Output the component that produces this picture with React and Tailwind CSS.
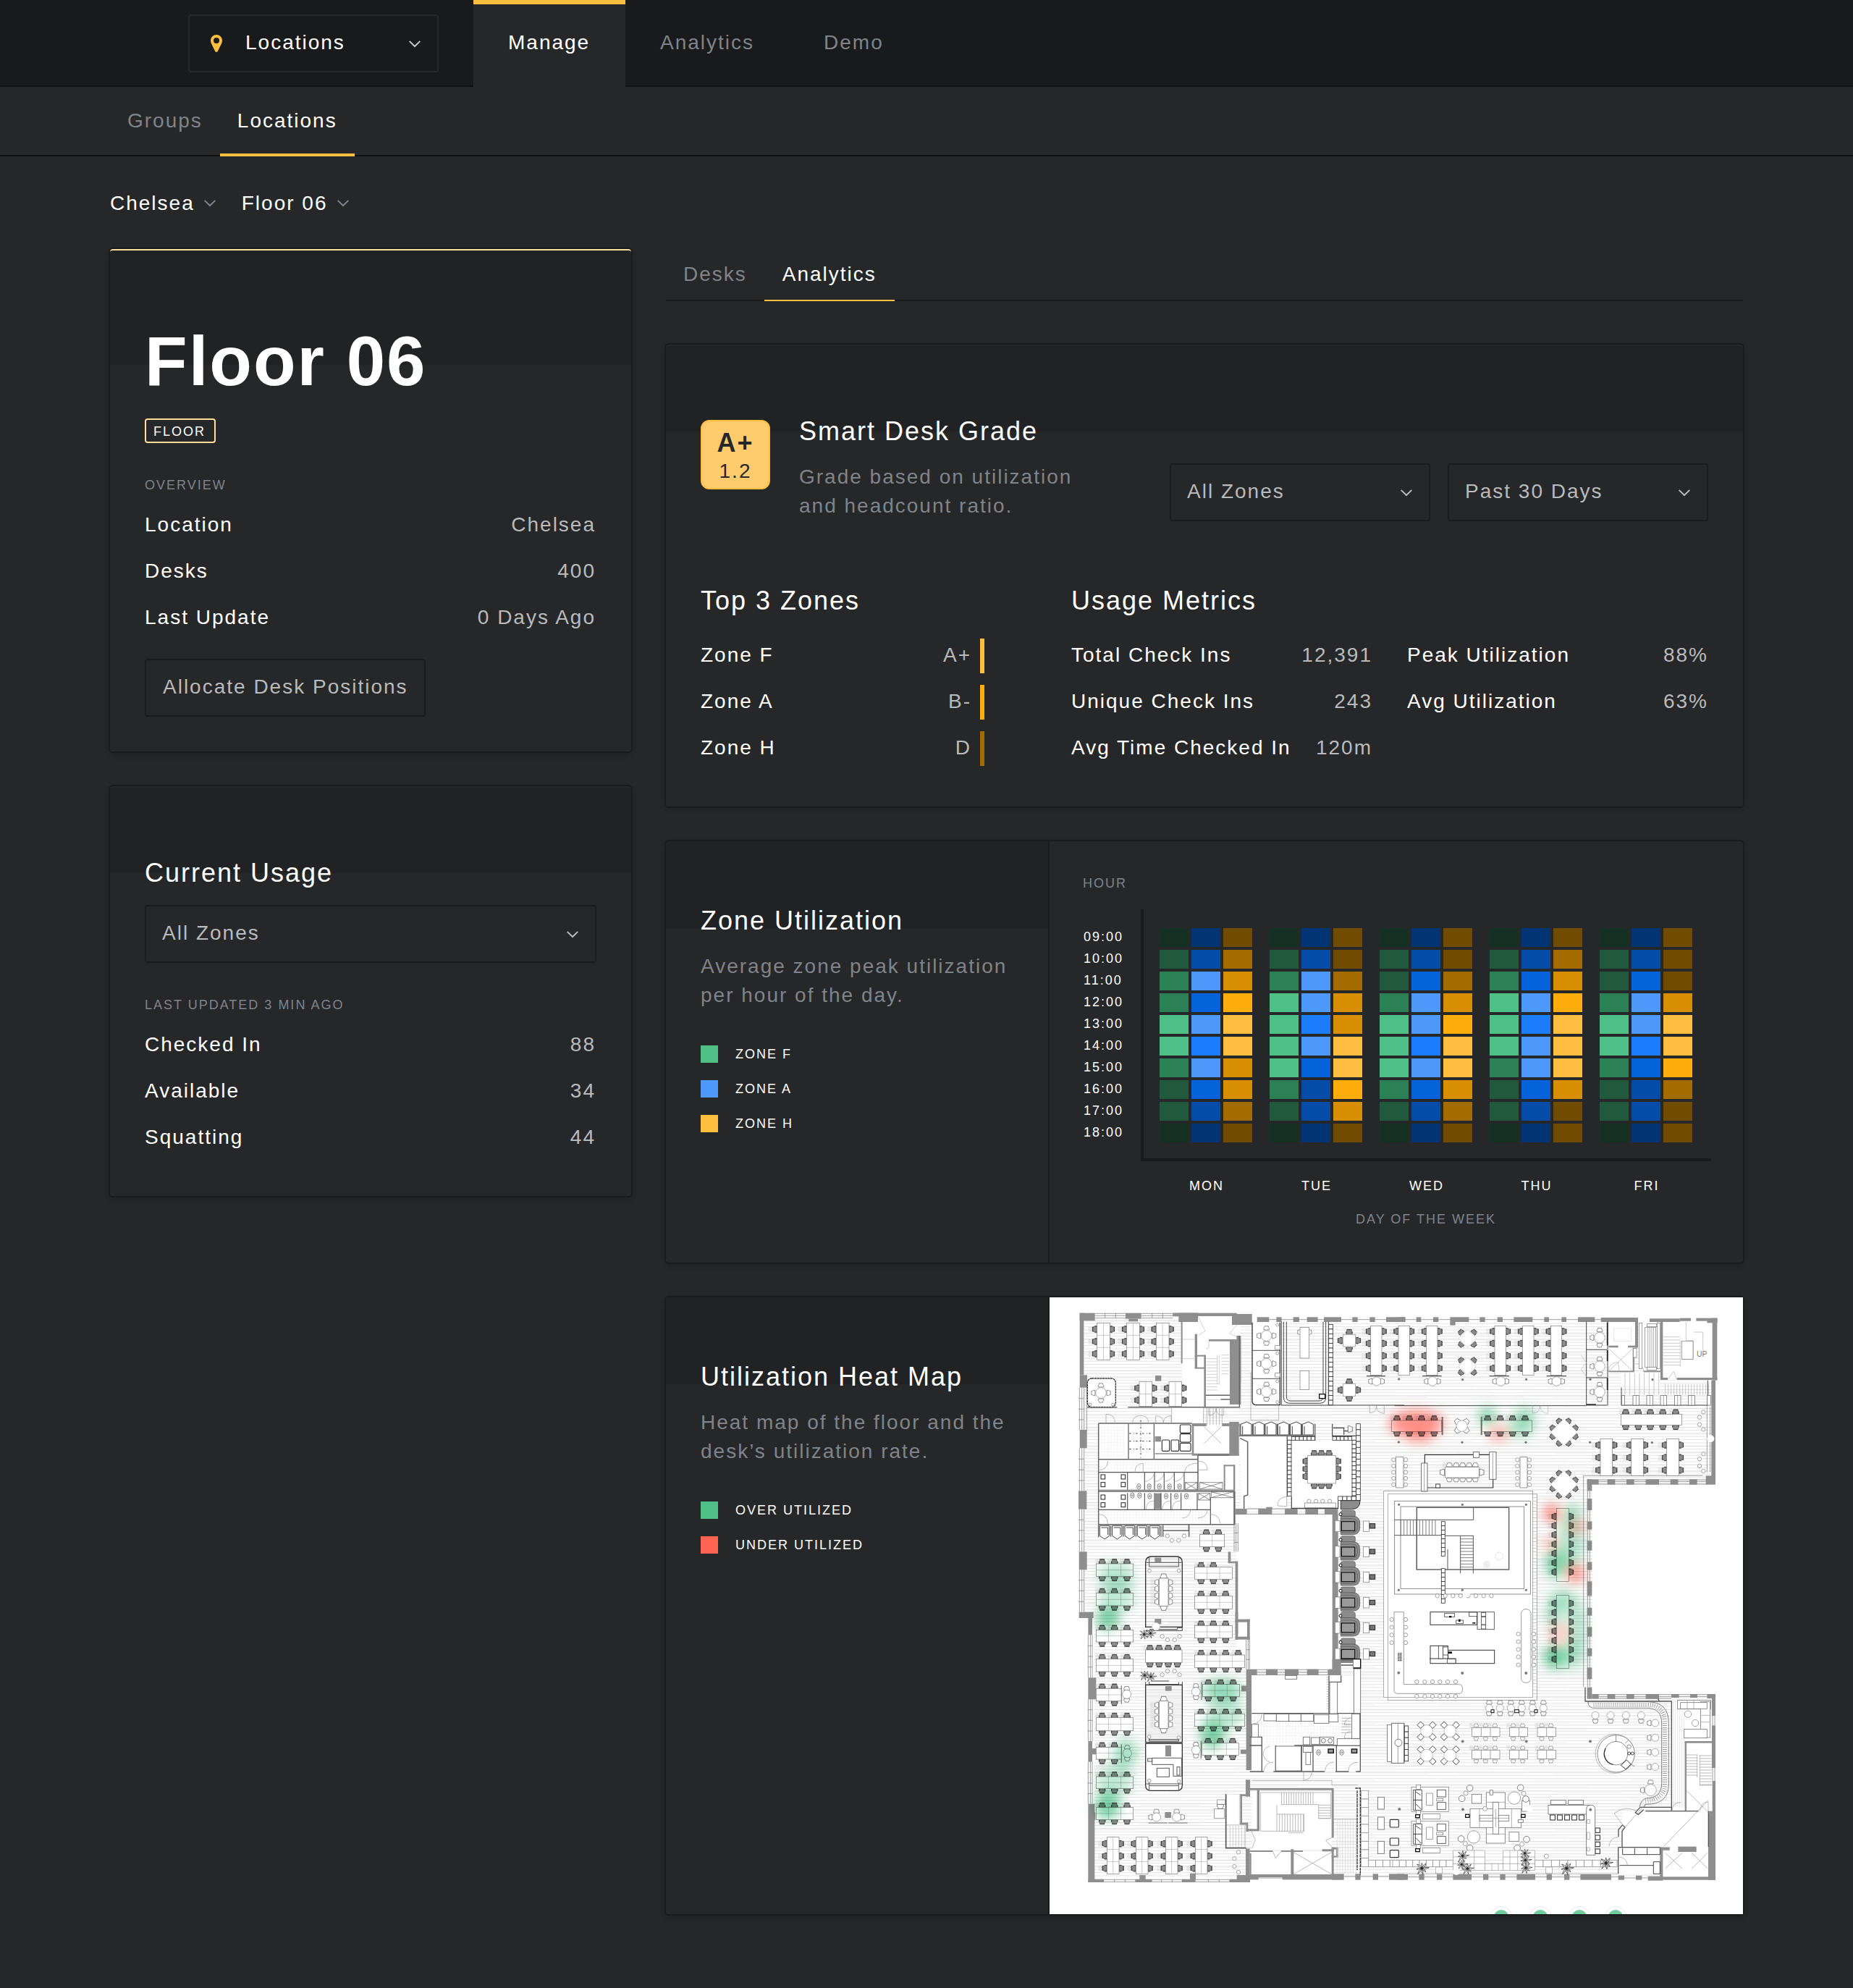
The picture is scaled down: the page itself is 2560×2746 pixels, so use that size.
import React from "react";

const Chevron = ({ className = "" }) => (
  <svg className={`h-[10px] w-4 shrink-0 ${className}`} viewBox="0 0 16 10" fill="none" stroke="currentColor" strokeWidth="2">
    <path d="M.7 .9L8 8l7.300-7.100" />
  </svg>
);

const Pin = () => (
  <svg className="h-6 w-4 shrink-0" viewBox="0 0 16 24">
    <path fillRule="evenodd" fill="#ffbe3d" d="M8 0a8 8 0 0 0-8 8c0 1.500.4 2.800 1 4.200L6.300 22.900q1.700 2.100 3.400 0L15 12.200c.6-1.400 1-2.700 1-4.200a8 8 0 0 0-8-8zm0 4a4 4 0 1 1 0 8 4 4 0 0 1 0-8z" />
  </svg>
);

const Select = ({ label, className = "" }) => (
  <div className={`flex h-20 items-start justify-between rounded-[4px] border-2 border-[#1a1b1d] pt-[21px] pr-[23px] pl-[22px] text-[#b9babc] ${className}`}>
    <span>{label}</span>
    <Chevron className="mt-[13px]" />
  </div>
);

const Card = ({ className = "", children }) => (
  <section className={`rounded-[4px] bg-[#262729] shadow-[0_0_0_2px_#1a1b1d,0_4px_8px_rgba(0,0,0,0.2)] ${className}`}>{children}</section>
);

const Row = ({ label, value }) => (
  <div className="flex h-16 items-start justify-between pt-[17px]">
    <span>{label}</span>
    <span className="pr-px text-[#b9babc]">{value}</span>
  </div>
);

const Metric = ({ label, value, bar }) => (
  <div className="flex h-12 items-start">
    <span className="grow pt-[7px]">{label}</span>
    <span className="pt-[7px] text-[#b9babc]">{value}</span>
    {bar && <span className={`ml-[12px] h-12 w-[6px] ${bar}`} />}
  </div>
);

const Caption = ({ className = "", children }) => (
  <div className={`text-[18px] leading-[20px] ${className}`}>{children}</div>
);

const Title = ({ className = "", children }) => (
  <h2 className={`text-[36px] leading-[41px] whitespace-nowrap ${className}`}>{children}</h2>
);

const SidePanel = ({ title, lines, legend }) => (
  <div className="w-[530px] shrink-0 rounded-l-[4px] border-r-2 border-[#1a1b1d] bg-[linear-gradient(#212224_120px,#262729_120px)] pt-[89px] pl-12">
    <Title>{title}</Title>
    <p className="mt-[23px] leading-[40px] whitespace-nowrap text-[#7e848a]">
      {lines[0]}
      <br />
      {lines[1]}
    </p>
    <div className="mt-[49px] flex flex-col gap-6">
      {legend.map(([color, text]) => (
        <div key={text} className="flex h-6 items-center gap-6">
          <span className={`h-6 w-6 ${color}`} />
          <Caption>{text}</Caption>
        </div>
      ))}
    </div>
  </div>
);

const GREEN = ["bg-[#133022]", "bg-[#20593c]", "bg-[#2b8055]", "bg-[#4fc188]"];
const BLUE = ["bg-[#023474]", "bg-[#044ca7]", "bg-[#0463da]", "bg-[#1b7dfb]", "bg-[#4c98fb]"];
const GOLD = ["bg-[#714b00]", "bg-[#a46c00]", "bg-[#d78e00]", "bg-[#ffad0d]", "bg-[#ffbe3f]"];
const WEEK = [
  ["MON", "0122332110", "0142434210", "0123442210"],
  ["TUE", "0123333210", "0144342110", "0012244320"],
  ["WED", "0112333210", "0124434210", "0012344210"],
  ["THU", "0123332110", "0124344210", "0123444200"],
  ["FRI", "0112332110", "0124432110", "0002443100"],
];
const HOURS = ["09:00", "10:00", "11:00", "12:00", "13:00", "14:00", "15:00", "16:00", "17:00", "18:00"];

const Column = ({ levels, palette }) => (
  <div className="flex flex-col gap-1">
    {levels.split("").map((l, i) => (
      <span key={i} className={`h-[26px] w-10 ${palette[+l]}`} />
    ))}
  </div>
);

/* ---------- floor plan ---------- */

const Rects = ({ d, ...p }) => <g {...p}>{d.map(([x, y, width, height, rx = 0], i) => <rect key={i} {...{ x, y, width, height, rx }} />)}</g>;
const Walls = ({ d }) => <Rects d={d} fill="#8e8e8e" />;
const Dots = ({ d, r = 8, ...p }) => <g fill="#fff" stroke="#777" strokeWidth="2" {...p}>{d.map(([x, y], i) => <circle key={i} cx={x} cy={y} r={r} />)}</g>;

const Chair = ({ x, y, a = 0, open, s = 1 }) => (
  <g transform={`translate(${x} ${y}) rotate(${a}) scale(${s})`}>
    <path d="M-9-10H9L10-4 13 0V8H-13V0L-10-4Z" fill={open ? "#fff" : "#8c8c8c"} stroke="#3d3d3d" strokeWidth="2" />
    {!open && <path d="M-10-9H10M-12 0V8M12 0V8" stroke="#333" strokeWidth="2.500" />}
  </g>
);

const Shade = ({ x, y, h }) => (
  <g stroke="#bdbdbd" strokeWidth="1.500">
    {[0.15, 0.4, 0.65, 0.9].map((f) => <path key={f} d={`M${x - 16} ${y + h * f}h16`} />)}
  </g>
);

const HBench = ({ x, y, w, h, cols, bottom, open, cells, s }) => (
  <g>
    {cols.map((c) => <Shade key={c} x={c - 12} y={y - 20} h={20} />)}
    {cols.map((c) => <Chair key={c} x={c} y={y - 9} open={open} s={s} />)}
    {(bottom || cols).map((c) => <Chair key={c} x={c} y={y + h + 9} a={180} open={open} s={s} />)}
    <rect x={x} y={y} width={w} height={h} fill="#fff" stroke="#777" strokeWidth="2" />
    {cells && <path d={`M${x} ${y + h / 2}h${w}` + Array.from({ length: cells - 1 }, (_, i) => `M${x + ((i + 1) * w) / cells} ${y}v${h}`).join("")} stroke="#999" strokeWidth="1.500" />}
  </g>
);

const VBench = ({ x, y, w, h, rows, cells, open, s }) => (
  <g>
    {rows.map((c) => <Shade key={c} x={x - 20} y={c - 12} h={24} />)}
    {rows.map((c) => <Chair key={c} x={x - 9} y={c} a={-90} open={open} s={s} />)}
    {rows.map((c) => <Chair key={c} x={x + w + 9} y={c} a={90} open={open} s={s} />)}
    <rect x={x} y={y} width={w} height={h} fill="#fff" stroke="#777" strokeWidth="2" />
    {cells && <path d={`M${x + w / 2} ${y}v${h}` + Array.from({ length: cells - 1 }, (_, i) => `M${x} ${y + ((i + 1) * h) / cells}h${w}`).join("")} stroke="#999" strokeWidth="1.500" />}
  </g>
);

const Round = ({ x, y, r = 22, at = [0, 90, 180, 270], d = 9, s = 0.85 }) => (
  <g>
    {at.map((a) => {
      const t = (a * Math.PI) / 180;
      return <Chair key={a} x={x + Math.sin(t) * (r + d)} y={y - Math.cos(t) * (r + d)} a={a} open s={s} />;
    })}
    <circle cx={x} cy={y} r={r} fill="#fff" stroke="#888" strokeWidth="2" />
  </g>
);

const Quad = ({ x, y }) => (
  <g>
    <Chair x={x} y={y - 36} />
    <Chair x={x} y={y + 36} a={180} />
    <Chair x={x - 37} y={y} a={-90} />
    <Chair x={x + 37} y={y} a={90} />
    <rect x={x - 25} y={y - 25} width="50" height="50" fill="#fff" stroke="#888" strokeWidth="2" />
  </g>
);

const Diamond = ({ x, y, h, seats }) => (
  <g>
    {seats.map(([dx, dy], i) => <Chair key={i} x={x + dx} y={y + dy} a={dx < 0 ? (dy < 0 ? -42 : -138) : dy < 0 ? 42 : 138} s={0.9} />)}
    <path d={`M${x} ${y - h}l${h} ${h}-${h} ${h}-${h}-${h}z`} fill="#fff" stroke="#ccc" strokeWidth="2" />
  </g>
);
const EIGHT = [[-21, -47], [19, -47], [-48, -19], [48, -19], [-48, 19], [48, 19], [-21, 47], [19, 47]];
const FOUR = [[-27, -26], [27, -26], [-27, 26], [27, 26]];

const Ladder = ({ x, y, w, h, n, vertical = true, dark = "#333" }) => (
  <g fill="#fff" stroke={dark} strokeWidth="2.500">
    {Array.from({ length: n }, (_, i) => (vertical ? <rect key={i} x={x} y={y + (i * h) / n} width={w} height={h / n} /> : <rect key={i} x={x + (i * w) / n} y={y} width={w / n} height={h} />))}
  </g>
);

const steps = (x, y, w, h, gap, vertical) => {
  let d = "";
  if (vertical) for (let i = 0; i <= w; i += gap) d += `M${x + i} ${y}v${h}`;
  else for (let i = 0; i <= h; i += gap) d += `M${x} ${y + i}h${w}`;
  return d;
};

const Plant = ({ x, y, s = 1 }) => (
  <g transform={`translate(${x} ${y}) scale(${s})`} fill="#fff" stroke="#222" strokeWidth="2">
    {[0, 40, 85, 130, 170, 215, 260, 310].map((a, i) => <path key={a} transform={`rotate(${a})`} d={`M0 0Q${6 + (i % 3)}-14 0-${22 + (i % 3) * 4}Q-5-12 0 0`} />)}
    <circle r="4" fill="#222" />
  </g>
);

const Toilets = ({ d }) => (
  <g fill="#fff" stroke="#444" strokeWidth="2">
    {d.map(([x, y], i) => <g key={i}><ellipse cx={x} cy={y} rx="8" ry="11" /><circle cx={x} cy={y} r="3" /></g>)}
  </g>
);

const Pod = ({ y }) => (
  <g>
    <rect x="1237" y={y - 64} width="60" height="28" rx="8" fill="#8c8c8c" stroke="#555" strokeWidth="2" />
    <circle cx="1236" cy={y - 48} r="6" fill="#fff" stroke="#111" strokeWidth="3" />
    <path d={`M1237 ${y - 40}h50q29 0 29 29v18q0 29-29 29h-50z`} fill="#8c8c8c" stroke="#444" strokeWidth="2" />
    <path d={`M1237 ${y - 30}h46q23 0 23 23v12q0 23-23 23h-46z`} fill="#8c8c8c" stroke="#555" strokeWidth="2" />
    <rect x="1240" y={y - 18} width="55" height="38" fill="#9a9a9a" stroke="#111" strokeWidth="3.500" />
    <rect x="1213" y={y - 22} width="20" height="46" fill="#fff" stroke="#777" strokeWidth="2" />
    <rect x="1330" y={y - 20} width="25" height="43" fill="#fff" stroke="#777" strokeWidth="2" />
    <rect x="1357" y={y - 9} width="22" height="19" fill="#777" stroke="#222" strokeWidth="3" />
  </g>
);

const Meeting = ({ y }) => (
  <g>
    <Chair x={503} y={y - 8} open />
    <Chair x={503} y={y + 123} a={180} open />
    <VBench x={484} y={y} w={38} h={115} rows={[y + 17, y + 44, y + 72, y + 98]} open s={0.85} />
  </g>
);

const NorthWest = () => (
  <g>
    <Rects fill="#fff" d={[[580, 112, 240, 378], [536, 495, 130, 62], [233, 560, 412, 200], [233, 765, 562, 68], [233, 845, 560, 130], [645, 560, 170, 275], [820, 612, 195, 300], [870, 140, 120, 340], [1033, 628, 250, 285], [804, 937, 400, 645]]} />
    <Walls d={[[155, 101, 63, 32], [155, 101, 17, 257], [155, 358, 31, 52], [345, 101, 65, 24], [358, 125, 38, 11], [541, 101, 104, 14], [565, 101, 80, 37], [541, 101, 265, 13], [786, 105, 83, 45], [777, 210, 46, 270], [805, 195, 18, 195], [690, 210, 90, 8], [632, 188, 10, 142], [632, 275, 46, 6], [632, 326, 46, 6], [670, 275, 8, 215], [575, 137, 6, 173], [468, 360, 25, 23], [155, 585, 30, 76], [150, 838, 34, 76], [152, 1090, 33, 75], [152, 1340, 60, 25], [467, 612, 25, 22], [620, 558, 60, 12], [620, 558, 8, 130], [745, 558, 70, 12], [775, 552, 40, 140], [620, 683, 195, 9], [233, 833, 562, 10], [467, 848, 25, 65], [752, 730, 46, 6], [752, 730, 6, 104], [792, 730, 7, 245], [800, 912, 48, 24], [895, 912, 57, 24], [928, 905, 25, 8], [1005, 912, 53, 24], [1090, 912, 53, 24], [1170, 910, 55, 26], [1202, 936, 24, 644], [800, 1130, 11, 250], [770, 1090, 11, 45], [770, 1130, 40, 8], [890, 118, 50, 20], [970, 118, 22, 20], [1040, 118, 25, 20], [1097, 118, 45, 20], [1167, 118, 72, 20], [1285, 118, 22, 20], [1357, 118, 22, 20], [1425, 118, 80, 20]]} />
    <path d="M218 103H345M218 112H345M218 122H345M260 101v22M304 101v22M410 103H541M410 112H541M410 122H541M455 101v22M499 101v22M154 410V585M164 410V585M173 405V592M184 405V592M154 661V838M164 661V838M173 661V838M154 914V1090M164 914V1090M173 914V1090M154 1165V1340M164 1165V1340M173 1165V1340M150 455h22M150 499h22M150 543h22M150 706h22M150 751h22M150 795h22M150 958h22M150 1002h22M150 1046h22M150 1208h22M150 1252h22M150 1297h22M795 972V1090M803 972V1090M811 972V1090M795 1012h17M795 1051h17M848 912h322M848 934h322M940 128H1500" stroke="#8a8a8a" strokeWidth="2.500" fill="none" />
    <path d={steps(680, 290, 45, 140, 13) + steps(742, 275, 32, 90, 13) + "M725 275V395h8V275M645 115l30 60-30 20M690 215v30l-12 5M806 150l-30 35 30 15M680 442h97M680 460h60M582 210h50M582 290h50"} stroke="#bbb" strokeWidth="2" fill="none" />
    <path d="M355 491H820M186 491H310M678 442H777M817 195V490M740 459h38M233 558H620M233 707H645M233 977H797M797 840V977M797 977V912M607 977V1003H502M233 558V1030M500 980V1028M608 980V1028M645 690H775M645 690V835M820 620l31 15V855l-15 5V912M815 610H1130V560M1130 612v18M1015 612V862" stroke="#666" strokeWidth="4.500" fill="none" />
    <path d="M357 560V705M463 560V705M467 684H620M233 761H645M353 761V833M424 761V833M465 761V833M505 761V833M547 761V833M588 761V833M353 847V915M424 847V915M465 847V915M492 847V915M533 847V915M575 847V915M642 847V915M697 865V975M233 916H697M353 916H640" stroke="#555" strokeWidth="3.500" fill="none" />
    <path d="M408 545V705M360 600h100M360 632h100M360 665h100" stroke="#444" strokeWidth="3" strokeDasharray="8 10 3 6" fill="none" />
    <path d={steps(240, 573, 108, 125, 13) + steps(240, 720, 395, 35, 12) + steps(240, 925, 450, 45, 12) + steps(246, 566, 100, 136, 13, true) + steps(246, 715, 390, 42, 13, true) + steps(246, 920, 440, 52, 13, true)} stroke="#ececec" strokeWidth="1.500" />
    <path d="M264 560V520q38 0 38 40M374 558q0-32 34-32 32 0 32 32M470 558V527q32 0 32 30 0-30 32-30V558M690 495V525q30 0 30-30 0 30 32 30V495M233 752q38 0 38-38M384 761q0-37 34-37v37M590 761q0-35 52-38M648 715q36 0 36 36h-36M233 935q38 0 38 40M697 935q38 0 40 38M430 915q0-35 35-36M497 915q0-35 36-36M538 915q0-35 36-36M580 950q30 0 35-34M645 950q36 0 40-34M424 800q34-5 41-38M465 800q34-5 40-38M505 800q34-5 42-38M547 800q34-5 41-38M975 900q0-35 38-38v40zM1357 485v30q28 0 28-30 0 30 32 32v-32M670 572l72 70M742 572l-72 70M668 495v70M745 495v70M682 495v70M695 495v70M708 495v70M721 495v70M734 495v70M536 495V558M864 345V545M980 480V545H864" stroke="#999" strokeWidth="2" fill="none" />
    <Rects fill="#fff" stroke="#333" strokeWidth="3.500" d={[[571, 564, 44, 34, 5], [571, 602, 44, 34, 5], [571, 640, 44, 33, 5], [496, 627, 31, 46, 5], [534, 627, 32, 46, 5]]} />
    <Rects fill="#fff" stroke="#222" strokeWidth="3" d={[[243, 771, 17, 18], [243, 803, 17, 18], [327, 771, 17, 18], [327, 803, 17, 18], [243, 855, 17, 18], [243, 887, 17, 18], [327, 855, 17, 18], [327, 887, 17, 18]]} />
    <path d="M592 803h50v30h-50zM592 803l50 30M642 803l-50 30M652 803h95v28h-95zM652 803l95 28M747 803l-95 28M647 848h48v28h-48zM647 848l48 28M695 848l-48 28M700 842h92v24h-92zM700 842l92 24M792 842l-92 24" stroke="#555" strokeWidth="2" fill="#fff" />
    <Toilets d={[[400, 820], [443, 820], [485, 820], [527, 820], [569, 820], [373, 857], [403, 857], [445, 860], [513, 860], [555, 860], [597, 860]]} />
    {[238, 290, 342, 394, 446].map((x) => <path key={x} d={`M${x} 982h40v42l-20 14-20-14zM${x + 6} 990h28v30M${x + 46} 982v46`} fill="#fff" stroke="#444" strokeWidth="3" />)}
    {[822, 874, 924, 976, 1028, 1078].map((x) => <path key={x} d={`M${x} 606v-44l25-10 20 10v44zM${x + 8} 570v34M${x - 3} 560v48`} fill="#fff" stroke="#444" strokeWidth="3" />)}
    <Dots d={[[518, 1025], [588, 1025], [537, 1043], [565, 1043]]} />
    <rect x="187" y="372" width="117" height="119" rx="18" fill="#fff" stroke="#333" strokeWidth="4" strokeDasharray="9 2" />
    <Round x={243} y={432} />
    <Dots d={[[198, 480], [293, 480]]} r={6} />
    {[227, 350, 472].map((x) => <VBench key={x} x={x} y={142} w={53} h={153} rows={[168, 219, 270]} cells={3} />)}
    {[402, 525].map((x) => <VBench key={x} x={x} y={386} w={53} h={101} rows={[412, 462]} cells={2} />)}
    <HBench x={653} y={1018} w={102} h={52} cols={[680, 730]} cells={2} />
    <HBench x={223} y={1140} w={154} h={52} cols={[248, 299, 351]} cells={3} />
    <HBench x={223} y={1262} w={154} h={52} cols={[248, 299, 351]} cells={3} />
    <HBench x={631} y={1154} w={156} h={50} cols={[658, 709]} bottom={[658, 709, 760]} cells={3} />
    <HBench x={631} y={1273} w={156} h={54} cols={[658, 709, 760]} cells={3} />
    <path d="M428 1402V1135q0-25 25-25h102q25 0 25 25V1402z" fill="url(#boards)" stroke="#333" strokeWidth="4" />
    <path d="M430 1135H578M443 1112v40h122v-40" stroke="#555" strokeWidth="3" fill="none" />
    <Walls d={[[466, 1115, 27, 20], [466, 1368, 27, 22]]} />
    <Dots d={[[444, 1169], [566, 1169]]} r={7} />
    <Meeting y={1200} />
    <path d="M870 140V465q0 17 17 17H985V140" fill="none" stroke="#333" strokeWidth="4" />
    <path d="M870 256H988M870 373H988" stroke="#555" strokeWidth="3" />
    <Dots d={[[974, 150], [974, 268], [974, 384], [974, 470]]} r={6} />
    <Rects fill="#fff" stroke="#777" strokeWidth="2" d={[[965, 236, 20, 16], [965, 350, 20, 16]]} />
    {[195, 311, 427].map((y) => <Round key={y} x={929} y={y} />)}
    <path d="M991 137V483M1000 137V450q0 25 25 25h125q25 0 25-25V137M1012 137V448q0 17 17 17h118q17 0 17-17V137M1186 137V484M990 483H1500" stroke="#444" strokeWidth="3" fill="none" />
    <rect x="1148" y="437" width="24" height="18" fill="#fff" stroke="#111" strokeWidth="4" />
    <Round x={1087} y={180} r={16} at={[90, 270]} d={4} />
    <Rects fill="#fff" stroke="#777" strokeWidth="2" d={[[1068, 160, 38, 128], [1068, 340, 38, 78]]} />
    <Ladder x={1187} y={148} w={17} h={334} n={17} />
    <Quad x={1272} y={215} />
    <Quad x={1272} y={420} />
    <VBench x={1361} y={154} w={46} h={205} rows={[177, 227, 278, 330]} />
    <path d="M1344 362h78" stroke="#555" strokeWidth="4" />
    <Round x={1385} y={384} r={18} at={[90, 270]} d={6} />
    <Ladder x={1016} y={628} w={16} h={232} n={13} />
    <Ladder x={1284} y={628} w={16} h={248} n={14} />
    <Ladder x={1301} y={560} w={17} h={318} n={13} />
    <Ladder x={1033} y={613} w={97} h={15} n={6} vertical={false} />
    <Ladder x={1203} y={613} w={80} h={15} n={5} vertical={false} />
    <Ladder x={1226} y={861} w={74} h={17} n={4} vertical={false} />
    <path d="M1202 560V610H1300M1206 577h44v28M1250 590h35M1033 862V910H1226V880" stroke="#444" strokeWidth="3.500" fill="none" />
    <Chair x={1275} y={582} a={90} open />
    {[1127, 1157, 1188].map((x) => <g key={x}><Chair x={x} y={681} /><Chair x={x} y={818} a={180} /></g>)}
    {[715, 747, 778].map((y) => <g key={y}><Chair x={1090} y={y} a={-90} /><Chair x={1227} y={y} a={90} /></g>)}
    <rect x="1100" y="692" width="116" height="115" fill="#fff" stroke="#777" strokeWidth="2" />
    <Dots d={[[1105, 881], [1134, 881], [1162, 881], [1191, 881]]} />
    <rect x="1087" y="888" width="130" height="20" fill="#fff" stroke="#777" strokeWidth="2" />
    {[983, 1089, 1194, 1300, 1404, 1513].map((y) => <Pod key={y} y={y} />)}
    <path d="M1237 878h80q0 36-35 36h-45z" fill="#8c8c8c" stroke="#333" strokeWidth="3" />
  </g>
);

const NorthEast = () => (
  <g transform="translate(1470 0)">
    <Rects fill="#fff" d={[[877, 140, 114, 100], [877, 245, 102, 98], [1003, 140, 88, 200], [1100, 137, 205, 235], [-55, 838, 630, 865], [810, 812, 600, 880], [928, 345, 160, 60]]} />
    <Walls d={[[0, 118, 32, 20], [80, 118, 20, 20], [150, 118, 22, 20], [220, 118, 78, 20], [220, 138, 22, 14], [343, 118, 22, 20], [416, 118, 22, 20], [484, 118, 78, 20], [610, 118, 20, 20], [682, 118, 20, 20], [750, 118, 70, 20], [845, 120, 142, 18], [987, 120, 12, 125], [1047, 124, 125, 14], [1172, 122, 46, 12], [1240, 122, 46, 12], [1285, 122, 43, 20], [1307, 122, 20, 258], [1303, 380, 17, 430], [1092, 137, 10, 240], [1092, 369, 30, 9], [1160, 369, 168, 9], [877, 236, 40, 8], [957, 236, 34, 8], [977, 245, 7, 98], [877, 340, 106, 6], [1022, 340, 70, 6], [788, 790, 48, 22], [872, 790, 32, 22], [951, 790, 32, 22], [1031, 790, 55, 22], [1133, 790, 32, 22], [1212, 790, 32, 22], [1280, 775, 40, 37], [788, 790, 20, 48], [788, 870, 20, 48], [788, 965, 20, 33], [788, 1045, 20, 40], [788, 1133, 20, 33], [788, 1213, 20, 60], [788, 1322, 20, 33], [788, 1402, 20, 40], [788, 1490, 20, 33], [788, 1570, 20, 48]]} />
    <path d="M32 128H845M836 792h450M836 800h450M836 810h450M790 838V1650M799 838V1650M773 775H1268M773 775V1650M1285 485V760M1298 490V760" stroke="#8a8a8a" strokeWidth="2.500" fill="none" />
    <path d="M-10 485H785M785 137V483H872M785 253H870M785 369H870M873 137V483M930 410V483H1290M1288 380V483" stroke="#444" strokeWidth="3" fill="none" />
    <path d={"M763 275l22 32-22 27 22 30M562 485v31q30 0 31-30 0 30 33 31v-31M1198 137v78h30v78h-50M1174 215V323M877 343q0-38 40-38 0 20 5 38M985 310q38 0 37 33M880 250l95 90M975 250l-95 90M1122 375l25-32 12 32M1230 180h38v75" + steps(1103, 200, 70, 120, 13) + steps(1112, 395, 185, 45, 12, true) + steps(945, 350, 140, 90, 20, true)} stroke="#b0b0b0" strokeWidth="2" fill="none" />
    <Rects fill="#fff" stroke="#777" strokeWidth="2" d={[[1003, 142, 13, 190], [1078, 142, 12, 190], [1036, 146, 40, 12], [1028, 160, 45, 165], [1036, 325, 40, 12], [1180, 217, 47, 75], [979, 247, 14, 38]]} />
    <rect x="899" y="165" width="72" height="52" fill="none" stroke="#ddd" strokeWidth="2" />
    <path d={steps(1040, 160, 24, 165, 8, true)} stroke="#888" strokeWidth="2" />
    <text x="1242" y="282" fill="#777" className="font-['Liberation_Sans',Arial,sans-serif] text-[31px] tracking-normal">UP</text>
    <Rects fill="#fff" stroke="#555" strokeWidth="2" d={[[932, 443, 12, 40], [978, 443, 26, 40], [1035, 443, 26, 40], [1092, 443, 26, 40], [1150, 443, 26, 40], [1208, 443, 26, 40], [1286, 443, 14, 40]]} />
    <path d="M991 443v40M1048 443v40M1105 443v40M1163 443v40M1221 443v40" stroke="#777" strokeWidth="2" />
    {[6, 122, 405, 521, 637].map((x) => <VBench key={x} x={x} y={154} w={46} h={205} rows={[177, 227, 278, 330]} />)}
    <Diamond x={292} y={206} h={37} seats={FOUR} />
    <Diamond x={292} y={322} h={37} seats={FOUR} />
    <path d="M105 362h80M383 362h82M620 362h82" stroke="#555" strokeWidth="4" />
    {[147, 430, 661].map((x) => <Round key={x} x={x} y={384} r={19} at={[90, 270]} d={6} />)}
    {[203, 322, 428].map((y) => <Round key={y} x={840} y={y} at={[0, 180, 270]} />)}
    <path d="M872 140V235M872 255V300M872 370V420M785 480h40" stroke="#222" strokeWidth="5" />
    <HBench x={928} y={520} w={252} h={45} cols={[948, 1000, 1050, 1102, 1155]} />
    {[843, 971, 1118].map((x) => <VBench key={x} x={x} y={622} w={50} h={153} rows={[648, 700, 752]} />)}
    <Dots d={[[1270, 511], [1254, 533], [1254, 563], [1270, 583], [1270, 685], [1254, 706], [1254, 735], [1270, 756]]} />
    <circle cx="1300" cy="622" r="15" fill="#fff" />
    <HBench x={-23} y={546} w={208} h={46} cols={[0, 51, 102, 154]} />
    <path d="M188 531v76M350 531v76" stroke="#777" strokeWidth="6" />
    <Round x={269} y={569} r={23} at={[45, 135, 225, 315]} d={4} s={0.9} />
    <HBench x={352} y={546} w={208} h={46} cols={[376, 428, 479, 531]} />
    <Diamond x={692} y={595} h={56} seats={EIGHT} />
    <Diamond x={692} y={811} h={56} seats={EIGHT} />
    {[709, 735, 761, 786, 812].map((y) => <Dots key={y} d={[[-14, y], [36, y], [499, y], [549, y]]} />)}
    <Rects fill="#fff" stroke="#666" strokeWidth="2" d={[[-4, 697, 31, 128], [510, 697, 30, 128]]} />
    <path d="M115 723V688H398V825H115z" fill="none" stroke="#333" strokeWidth="3.500" />
    <Rects fill="#fff" stroke="#555" strokeWidth="2.500" d={[[101, 723, 25, 117], [383, 677, 28, 113], [316, 677, 25, 23]]} />
    <path d="M113 725v113M397 680v108" stroke="#777" strokeWidth="2" />
    <Chair x={189} y={761} a={-90} open />
    <Chair x={350} y={761} a={90} open />
    <HBench x={200} y={740} w={140} h={43} cols={[217, 245, 272, 299, 325]} open s={0.85} />
    <rect x="161" y="810" width="17" height="15" fill="#fff" stroke="#444" strokeWidth="3" />

    <Rects fill="none" stroke="#888" strokeWidth="2" d={[[-55, 838, 618, 855], [-38, 851, 618, 854]]} />
    <Rects fill="#fff" stroke="#777" strokeWidth="2.500" d={[[-10, 880, 563, 386], [15, 903, 512, 340]]} />
    <path d="M571 851V1693" stroke="#bbb" strokeWidth="14" strokeDasharray="2 12" />
    <rect x="82" y="907" width="382" height="257" fill="#fff" stroke="#555" strokeWidth="4" />
    <path d="M-10 958H317V907M-10 1022H191M82 1022V1164M191 1024H263V1180M316 1024V1180M263 1024h54M210 1080v84" fill="none" stroke="#555" strokeWidth="3" />
    <path d={steps(16, 958, 155, 64, 13, true) + steps(263, 1037, 53, 120, 13)} stroke="#666" strokeWidth="2.500" />
    <Ladder x={184} y={965} w={15} h={143} n={8} />
    <Ladder x={184} y={1160} w={15} h={143} n={8} />
    <Dots d={[[167, 1273], [200, 1273], [232, 1273], [263, 1273], [295, 1273], [327, 1273], [359, 1273], [391, 1273]]} />
    <circle cx="288" cy="1262" r="16" fill="#fff" />
    <circle cx="423" cy="1108" r="16" fill="#fff" stroke="#e5e5e5" strokeWidth="3" />
    <circle cx="372" cy="1143" r="15" fill="#eee" />
    <Dots r={4} fill="#777" d={[[8, 375], [272, 377], [536, 376], [801, 376], [1059, 377], [7, 636], [270, 637], [534, 637], [800, 637], [1057, 638], [8, 895], [271, 895], [535, 895], [7, 1249], [271, 1249], [535, 1249]]} />
    <VBench x={661} y={910} w={51} h={303} rows={[944, 982, 1020, 1059, 1097, 1136, 1174]} />
    <VBench x={661} y={1270} w={51} h={304} rows={[1304, 1342, 1381, 1419, 1458, 1496, 1535]} />
  </g>
);

const SouthWest = () => (
  <g transform="translate(0 1320)">
    <Rects fill="#fff" d={[[868, 283, 450, 157], [868, 442, 450, 236], [900, 763, 300, 240], [868, 763, 25, 160], [868, 1012, 335, 95], [765, 778, 55, 120], [867, 930, 40, 80]]} />
    <Walls d={[[190, 45, 17, 70], [190, 292, 33, 90], [190, 555, 17, 86], [207, 585, 16, 25], [190, 815, 27, 325], [207, 850, 13, 32], [190, 1127, 65, 13], [385, 1127, 70, 13], [403, 1110, 25, 20], [578, 1127, 57, 13], [612, 1103, 24, 25], [775, 1127, 86, 13], [806, 1110, 55, 28], [845, 280, 22, 395], [825, 325, 25, 24], [822, 590, 25, 18], [843, 715, 18, 70], [820, 775, 40, 8], [820, 775, 8, 125], [820, 893, 32, 9], [845, 893, 8, 37], [843, 1000, 17, 125], [845, 257, 45, 25], [927, 257, 48, 25], [1005, 257, 57, 25], [1097, 257, 48, 25], [1183, 257, 55, 25], [1202, 215, 36, 65], [800, 20, 11, 90], [800, 50, 60, 12], [800, 122, 60, 12], [800, 50, 11, 85], [849, 50, 11, 85], [860, 750, 345, 8], [890, 757, 10, 170], [845, 919, 55, 9], [1199, 750, 9, 205], [1199, 995, 27, 9], [1199, 995, 9, 120], [1218, 1000, 8, 35], [1199, 1030, 27, 7], [860, 1008, 95, 6], [990, 1008, 90, 6], [1160, 1003, 48, 9], [1030, 1003, 12, 105], [860, 1107, 370, 12], [860, 1117, 36, 12], [995, 1107, 235, 22], [1200, 1105, 50, 25], [1297, 1105, 22, 25], [1370, 1105, 22, 25], [1437, 1105, 63, 25], [860, 1020, 6, 90]]} />
    <path d="M190 115V292M199 115V292M207 115V292M190 382V555M199 382V555M207 382V555M190 641V815M199 641V815M207 641V815M188 160h20M188 204h20M188 248h20M188 425h20M188 469h20M188 513h20M188 685h20M188 729h20M188 773h20M255 1129H385M255 1138H385M455 1129H578M455 1138H578M635 1129H775M635 1138H775M299 1127v13M343 1127v13M494 1127v13M538 1127v13M688 1127v13M733 1127v13M845 135V257M853 135V257M859 135V257M845 176h15M845 217h15M890 259H1183M890 270H1183M890 280H1183M890 1122H1000M1250 1116H1440" stroke="#8a8a8a" strokeWidth="2.500" fill="none" />
    <HBench x={223} y={94} w={154} h={50} cols={[248, 299, 351]} cells={3} />
    <HBench x={223} y={215} w={154} h={52} cols={[248, 299, 351]} cells={3} />
    <HBench x={223} y={337} w={105} h={52} cols={[248, 299]} cells={2} />
    <HBench x={223} y={458} w={154} h={54} cols={[248, 299, 351]} cells={3} />
    <HBench x={223} y={580} w={105} h={50} cols={[248, 299]} cells={2} />
    <HBench x={223} y={702} w={154} h={50} cols={[248, 299, 351]} cells={3} />
    <HBench x={223} y={830} w={154} h={50} cols={[248, 299, 351]} cells={3} />
    <Round x={350} y={361} r={18} at={[0, 180]} d={6} />
    <Round x={352} y={605} r={18} at={[0, 180]} d={6} />
    <path d="M328 325v76M328 568v76M660 310v74M658 554v74" stroke="#888" strokeWidth="4" />
    <HBench x={631} y={76} w={156} h={52} cols={[658, 709, 760]} cells={3} />
    <HBench x={631} y={198} w={208} h={52} cols={[658, 709, 760, 812]} cells={4} />
    <HBench x={664} y={320} w={153} h={50} cols={[688, 739, 791]} cells={3} />
    <HBench x={631} y={442} w={208} h={52} cols={[658, 709, 760, 812]} cells={4} />
    <HBench x={661} y={563} w={153} h={50} cols={[687, 738, 789]} cells={3} />
    <Round x={637} y={350} r={18} at={[0, 180]} d={6} />
    <Round x={637} y={592} r={18} at={[0, 180]} d={6} />
    <HBench x={428} y={177} w={151} h={52} cols={[446, 484, 522, 560]} />
    <path d="M428 82H580M445 92H560V85H580V97H427" stroke="#444" strokeWidth="3" fill="none" />
    <circle cx="471" cy="80" r="16" fill="#fff" stroke="#ccc" strokeWidth="2" />
    <Plant x={422} y={112} s={0.8} />
    <Plant x={448} y={108} s={0.8} />
    <Plant x={424} y={282} s={0.8} />
    <Plant x={450} y={288} s={0.8} />
    <Dots d={[[497, 121], [569, 121], [519, 135], [548, 135], [497, 280], [569, 280], [519, 265], [548, 265]]} />
    <rect x="428" y="322" width="152" height="238" fill="url(#boards)" stroke="#333" strokeWidth="4" />
    <path d="M428 309V325M580 309V325M443 309V320H565V311M455 306H525M443 530V555H565V535M443 548H565" fill="none" stroke="#444" strokeWidth="3" />
    <path d="M428 565H580V738q0 22-22 22H450q-22 0-22-22z" fill="#fff" stroke="#333" strokeWidth="4" />
    <path d="M455 625H578V700H543V652H455zM443 712V740H565V715M430 732H578M443 740V758M565 740V758" fill="none" stroke="#555" strokeWidth="3" />
    <Rects fill="#fff" stroke="#555" strokeWidth="3" d={[[475, 667, 51, 36], [437, 627, 18, 12], [558, 662, 12, 34]]} />
    <Dots d={[[443, 537], [566, 540], [443, 719], [566, 722]]} r={7} />
    <Walls d={[[510, 327, 26, 20], [510, 573, 24, 45], [508, 849, 26, 24]]} />
    <Meeting y={388} />
    <Round x={473} y={870} r={18} at={[0, 270]} d={6} />
    <Round x={557} y={870} r={18} at={[0, 90]} d={6} />
    <path d="M440 894h78M522 894h80" stroke="#777" strokeWidth="3" />
    {[268, 388, 511, 634].map((x) => <VBench key={x} x={x} y={953} w={50} h={152} rows={[980, 1031, 1082]} cells={3} />)}
    <path d="M761 775V998H845" fill="none" stroke="#555" strokeWidth="5" />
    <path d={"M817 775V900M765 902H842V995" + steps(778, 905, 60, 90, 12, true)} stroke="#bbb" strokeWidth="2" fill="none" />
    <Rects fill="#fff" stroke="#777" strokeWidth="2" d={[[713, 835, 42, 40], [725, 798, 33, 20]]} />
    <Chair x={738} y={825} a={180} open />
    <Dots d={[[813, 1015], [796, 1042], [796, 1074], [813, 1098]]} />

    <path d={steps(868, 455, 410, 120, 13) + steps(880, 445, 400, 125, 13, true)} stroke="#ececec" strokeWidth="1.500" />
    <path d={steps(1128, 590, 85, 90, 13) + steps(1225, 590, 85, 90, 13)} stroke="#e5e5e5" strokeWidth="1.500" />
    <path d="M868 440H1318V682M958 681H1170M1215 681H1270M1075 573V681M1045 573H1318M1122 573V681M1219 573V681M1188 283V440M1188 310H1238V283M860 538H910V572M860 573H910V680M860 681H918M967 573V680H1075M1300 681H1318M1238 240H1290" fill="none" stroke="#5c5c5c" strokeWidth="4" />
    <Rects fill="#fff" stroke="#666" strokeWidth="2.500" d={[[918, 443, 52, 28], [970, 443, 52, 30], [1022, 443, 50, 30], [1072, 443, 52, 30], [1126, 446, 62, 35], [1188, 443, 38, 32], [868, 485, 27, 53], [1283, 442, 33, 102], [1081, 538, 28, 32], [1115, 540, 34, 28], [1150, 538, 58, 30], [1222, 545, 95, 28], [1191, 311, 32, 130], [1007, 283, 48, 15], [967, 576, 105, 102], [1081, 577, 38, 24], [1092, 602, 20, 50]]} />
    <Rects fill="#999" stroke="#111" strokeWidth="4" d={[[1185, 588, 22, 16], [1282, 588, 22, 16]]} />
    <Dots r={9} d={[[1165, 553], [1193, 553]]} stroke="#333" />
    <Toilets d={[[1145, 602], [1241, 602]]} />
    <path d={"M868 485q42-5 42-43M1280 458q-28 5-28 30 5 0 28 0M1280 515q-28 0-28 28h28M915 608q5 30 28 32M915 608q5-30 28-32M918 680q5-38 40-38M1083 680v38q34-5 35-38M1172 680q0-35 36-38M1268 680q0-35 40-38M868 718H1200V737H1305M860 720v30M955 1012l12 27 23-27M1040 1015l160 92M1200 1015l-160 92M868 930l15 35-15 35M1200 955l-25 12 25 25M1208 878h95" + steps(1178, 290, 8, 135, 10) + steps(1240, 460, 40, 70, 12)} fill="none" stroke="#999" strokeWidth="2" />
    <path d={steps(992, 768, 130, 50, 10, true) + steps(972, 858, 112, 70, 11, true) + steps(1145, 820, 50, 55, 11) + "M903 768H1195V875H1145V818H990M972 820V858H1085V928H905V770M1020 935h62"} stroke="#999" strokeWidth="2" fill="none" />
    <path d={steps(1222, 880, 80, 225, 11, true)} stroke="#d5d5d5" strokeWidth="2" />
    <Rects fill="#fff" stroke="#666" strokeWidth="2.500" d={[[1288, 215, 31, 38], [1291, 255, 28, 185]]} />
    <path d="M1237 215H1319V252H1290" fill="none" stroke="#111" strokeWidth="4" />
    <path d="M1297 750H1318V1110M1305 760V1090" fill="none" stroke="#333" strokeWidth="4" strokeDasharray="12 2" />
    <Ladder x={1322} y={760} w={30} h={315} n={9} dark="#999" />
    <Ladder x={1352} y={1048} w={148} h={28} n={5} vertical={false} dark="#999" />
    <Rects fill="#fff" stroke="#666" strokeWidth="2.500" d={[[1390, 787, 27, 50], [1390, 870, 27, 51], [1390, 970, 27, 51]]} />
    <Rects fill="#fff" stroke="#333" strokeWidth="3.500" d={[[1441, 880, 36, 32, 3], [1441, 957, 36, 30, 3], [1441, 1007, 36, 30, 3]]} />
    <Rects fill="#fff" stroke="#666" strokeWidth="2.500" d={[[1430, 487, 20, 153], [1448, 481, 52, 165]]} />

    <path d="M1458 20h40v300h228q15 0 15 15v8q0 15-15 15H1473q-15 0-15-15z" fill="#fff" stroke="#888" strokeWidth="2.500" />
    <path d="M1477 190v36M1486 190v36" stroke="#333" strokeWidth="8" strokeDasharray="3 3" />
    <Dots d={[[1448, 51], [1448, 83], [1448, 115], [1448, 147]]} />
  </g>
);

const SouthEast = () => (
  <g transform="translate(1470 1320)">
    <Rects fill="#fff" d={[[1140, 392, 165, 450], [935, 850, 355, 142], [1100, 1012, 190, 105], [920, 1000, 168, 105]]} />
    <Walls d={[[808, 360, 28, 20], [788, 332, 20, 48], [872, 360, 32, 20], [951, 360, 32, 20], [1031, 360, 55, 20], [1137, 360, 32, 15], [1215, 360, 30, 15], [1285, 360, 35, 18], [1305, 360, 15, 90], [1305, 490, 15, 176], [1307, 720, 13, 410], [1290, 845, 30, 285], [1193, 555, 112, 8], [1193, 555, 7, 290], [0, 1107, 45, 23], [91, 1107, 22, 23], [165, 1107, 22, 23], [232, 1107, 77, 23], [357, 1107, 22, 23], [427, 1107, 22, 23], [496, 1107, 77, 23], [620, 1107, 22, 23], [693, 1107, 22, 23], [760, 1107, 128, 23], [917, 1112, 25, 18], [990, 1112, 25, 18], [1040, 1115, 62, 18], [1090, 995, 12, 130], [1095, 1117, 225, 13], [1165, 992, 76, 22], [1090, 995, 40, 12]]} />
    <path d="M836 362H1285M836 370H1285M836 378H1137M45 1118H917M942 1122H1040M1308 450V490M1317 450V490M1308 666V720M1317 666V720" stroke="#8a8a8a" strokeWidth="2.500" fill="none" />
    <path d="M780 332V390H1138V845M1082 378l5 12M1008 829H1140M1030 845H1180M1008 829l-20 22 12 8 22-20M935 902l-17 20v30M935 902l10 10-12 16V993M917 995H1090M917 995V1105M1180 845H1250M1291 845V993" fill="none" stroke="#555" strokeWidth="4" />
    <path d="M792 392q0 24 22 26H1035q62 0 62 62V730q0 60-65 62-22 8-26 35M790 392H1038q88 0 88 88V735q0 82-95 82l-8 12" fill="none" stroke="#666" strokeWidth="2.500" />
    <path d="M815 405H1037q73 0 73 75V733q0 62-80 70" fill="none" stroke="#888" strokeWidth="18" strokeDasharray="2 7" />
    {[822, 885, 949, 1012].map((x) => <Round key={x} x={x} y={448} r={15} at={[180]} d={9} />)}
    {[480, 541, 601, 662].map((y) => <Round key={y} x={1070} y={y} r={15} at={[270]} d={9} />)}
    <Round x={1051} y={758} r={24} at={[0, 270]} />
    <g fill="none" stroke="#777" strokeWidth="2.500">
      <circle cx="903" cy="607" r="81" stroke="#aaa" />
      <circle cx="908" cy="607" r="77" fill="#fff" />
      <circle cx="908" cy="605" r="49" />
      <path d="M865 585a45 45 0 0 0 30 67" stroke="#333" strokeWidth="4" />
      <path d="M908 530v28M945 565l15-15M950 640l35 20" />
      <circle cx="962" cy="578" r="8" /><circle cx="962" cy="606" r="6" stroke="#222" /><circle cx="976" cy="606" r="6" stroke="#222" />
      <path d="M928 655l24-22 18 18-22 20z" stroke="#111" fill="#fff" />
    </g>
    <path d={steps(1145, 380, 45, 450, 9, true)} stroke="#ddd" strokeWidth="2" />
    <Rects fill="#fff" stroke="#777" strokeWidth="2.500" d={[[1163, 385, 137, 37], [1258, 392, 40, 148], [1190, 506, 95, 36], [1175, 395, 110, 26]]} />
    <path d="M1258 448h40M1258 476h40M1203 385v36M1230 385v36" stroke="#999" strokeWidth="2" />
    <Dots r={14} d={[[1206, 443], [1236, 480]]} />
    <path d={steps(1200, 612, 45, 90, 12) + steps(1255, 615, 50, 120, 12) + "M1244 612V705M1255 612V738H1305M1200 760l105 105M1105 992L1290 800M1140 845q0-38 38-36M1255 845q5-38 35-38v38M900 855l45 60M900 855q40-35 90-12M878 992q5-38 40-40M920 1035q35 5 35 35M945 912L1030 815M1112 1018l70 65M1182 1018l-70 65M1222 1018l66 65M1288 1018l-66 65"} stroke="#999" strokeWidth="2" fill="none" />
    <path d="M935 998V1025H1090V998M985 998v27M1037 998v27M1063 1055h27v50h-27zM922 1070H1062" fill="none" stroke="#444" strokeWidth="3" />

    <Rects fill="#fff" stroke="#333" strokeWidth="3" d={[[138, 20, 193, 53], [138, 160, 73, 55], [212, 178, 192, 55], [138, 213, 105, 20]]} />
    <Rects fill="#fff" stroke="#444" strokeWidth="2.500" d={[[333, 20, 70, 72], [197, 26, 42, 14], [245, 54, 29, 14], [299, 21, 33, 17], [350, 40, 18, 32], [350, 22, 18, 16], [350, 74, 18, 16], [172, 160, 19, 53], [191, 165, 20, 33], [208, 215, 35, 17]]} />
    <Rects fill="#111" d={[[216, 36, 10, 7], [255, 50, 8, 10], [212, 184, 16, 8], [313, 63, 12, 5]]} />
    <rect x="515" y="8" width="40" height="305" rx="18" fill="#fff" stroke="#888" strokeWidth="2.500" />
    {[111, 143, 175, 206, 239].map((y) => <Dots key={y} d={[[503, y], [567, y]]} />)}
    <Dots d={[[36, 51], [36, 83], [36, 115], [36, 147], ...[82, 115, 147, 178, 210, 243].flatMap((x) => [[x, 309], [x, 369]])]} />
    <Dots r={5} fill="#777" d={[[7, 272], [271, 273], [535, 273], [272, 556], [536, 556], [801, 556], [10, 837], [273, 838]]} />

    {[382, 427, 472, 517, 562, 607].map((x) => <Round key={x} x={x} y={418} r={15} at={[0, 180]} d={8} />)}
    <Rects fill="#fff" stroke="#111" strokeWidth="3" d={[[488, 425, 17, 12], [570, 425, 12, 12], [390, 425, 12, 12]]} />
    {[[123, 513], [220, 513], [123, 614], [220, 614]].map(([x, y], i) => (
      <g key={i}>
        {[[-25, -25], [25, -25], [-25, 25], [25, 25]].map(([a, b]) => <rect key={a + "," + b} x={x + a - 10} y={y + b - 10} width="20" height="20" transform={`rotate(45 ${x + a} ${y + b})`} fill="#fff" stroke="#333" strokeWidth="2.500" />)}
        <circle cx={x} cy={y} r="25" fill="#fff" stroke="#aaa" strokeWidth="2" />
      </g>
    ))}
    {[499, 592].map((y) => (
      <g key={y}>
        <HBench x={311} y={y} w={115} h={37} cols={[328, 367, 406]} open s={0.7} />
        <HBench x={466} y={y} w={76} h={37} cols={[482, 521]} open s={0.7} />
        <HBench x={582} y={y} w={76} h={37} cols={[600, 638]} open s={0.7} />
        <path d={`M349 ${y}v37M387 ${y}v37M506 ${y}v37M620 ${y}v37`} stroke="#777" strokeWidth="2" />
      </g>
    ))}
    <rect x="-22" y="481" width="51" height="165" fill="#fff" stroke="#666" strokeWidth="2.500" />
    <path d="M4 481V646" stroke="#777" strokeWidth="2" />
    <circle cx="6" cy="562" r="15" fill="#fff" stroke="#666" strokeWidth="2.500" />
    <Ladder x={31} y={492} w={16} h={146} n={6} />

    {[745, 886].map((y) => (
      <g key={y}>
        <rect x="60" y={y} width="154" height="102" fill="#fff" fillOpacity="0.6" stroke="#777" strokeWidth="2" />
        <Rects fill="#fff" stroke="#444" strokeWidth="2.500" d={[[68, y + 12, 35, 84], [166, y + 12, 36, 29], [166, y + 64, 36, 29]]} />
        <path d={`M76 ${y + 12}v84M68 ${y + 54}h35M78 ${y + 20}l20 14M78 ${y + 70}l22 22`} stroke="#222" strokeWidth="2.500" />
        <Rects fill="#fff" stroke="#777" strokeWidth="2" d={[[122, y + 26, 26, 50], [164, y + 48, 27, 10], [80, y - 9, 18, 18], [80, y + 98, 18, 16], [106, y + 112, 73, 20]]} />
        <rect x="77" y={y + 115} width="17" height="12" fill="#fff" stroke="#111" strokeWidth="4" />
      </g>
    ))}
    <Rects fill="#fff" stroke="#777" strokeWidth="2.500" d={[[370, 768, 78, 210], [303, 835, 212, 78], [342, 862, 122, 24], [397, 808, 24, 132], [310, 775, 40, 38], [465, 932, 40, 38], [385, 758, 12, 20], [502, 880, 21, 12], [518, 802, 32, 44]]} />
    <path d="M370 808h78M370 940h78M409 835v78M342 835v78M475 835v78M342 874h122" stroke="#888" strokeWidth="2" />
    <Dots r={26} d={[[486, 791], [318, 952]]} />
    <Dots r={13} stroke="#444" d={[[302, 750], [269, 793], [512, 748], [534, 795], [266, 960], [302, 998], [537, 962], [498, 998]]} />
    <Dots r={9} d={[[285, 771], [525, 772], [365, 835], [283, 980], [518, 982], [619, 1032]]} />
    <circle cx="547" cy="834" r="15" fill="#fff" />
    <Rects fill="#fff" stroke="#111" strokeWidth="4" d={[[284, 859, 16, 12], [515, 859, 16, 12]]} />
    <Rects fill="#fff" stroke="#666" strokeWidth="2.500" d={[[637, 800, 63, 17], [710, 800, 63, 17], [627, 820, 172, 38]]} />
    <Rects fill="#fff" stroke="#222" strokeWidth="3" d={[645, 675, 705, 735, 765].map((x) => [x - 10, 861, 20, 21])} />
    <Rects fill="#fff" stroke="#222" strokeWidth="3" d={[925, 955, 983, 1012].map((y) => [822, y - 10, 19, 19])} />
    <path d="M785 1027V838q0-18 18-18t18 18V1027z" fill="#fff" stroke="#666" strokeWidth="2.500" />
    <Rects fill="#fff" stroke="#999" strokeWidth="2" d={[[788, 880, 11, 15], [788, 933, 11, 28], [788, 996, 11, 14]]} />
    <Dots r={5} fill="#777" d={[[802, 839]]} />
    <Ladder x={-18} y={1048} w={250} h={28} n={9} vertical={false} dark="#999" />
    <Ladder x={572} y={1048} w={340} h={28} n={10} vertical={false} dark="#999" />
    <Rects fill="#fff" stroke="#999" strokeWidth="2" d={[[232, 1008, 132, 82], [440, 1008, 131, 82], [364, 1063, 76, 27], [617, 1077, 26, 26], [160, 1077, 27, 26]]} />
    <path d="M275 1008v82M320 1008v82M232 1035h132M232 1063h132M468 1008v82M500 1008v82M440 1035h131M440 1063h131M393 1063v27M420 1063v27M0 1105H917" stroke="#999" strokeWidth="2" />
    <Plant x={103} y={1082} />
    <Plant x={272} y={1030} s={0.9} />
    <Plant x={268} y={1066} s={0.8} />
    <Plant x={292} y={1083} s={0.9} />
    <Plant x={530} y={1020} s={0.8} />
    <Plant x={532} y={1048} s={0.9} />
    <Plant x={534} y={1080} s={0.9} />
    <Plant x={703} y={1082} />
    <Plant x={866} y={1060} />
    <circle cx="246" cy="1095" r="15" fill="#fff" />
  </g>
);

/* colour, centre x, centre y, radius x, radius y, opacity */
const HEAT = [
  ["g", 305, 1190, 75, 55, 0.4], ["g", 310, 1275, 75, 70, 0.32], ["g", 272, 1365, 48, 48, 0.75],
  ["g", 745, 1665, 80, 48, 0.6], ["g", 760, 1760, 75, 70, 0.35], ["g", 705, 1845, 50, 60, 0.75],
  ["g", 345, 1925, 50, 60, 0.5], ["g", 300, 2035, 75, 70, 0.35], ["g", 270, 2140, 50, 60, 0.75],
  ["r", 1550, 560, 115, 58, 0.68], ["r", 1565, 610, 60, 35, 0.35],
  ["g", 1845, 530, 40, 40, 0.6], ["g", 1975, 580, 65, 42, 0.38], ["g", 1998, 535, 45, 45, 0.5], ["r", 1890, 600, 42, 35, 0.45],
  ["g", 2190, 1040, 55, 130, 0.42], ["r", 2112, 930, 35, 38, 0.7], ["g", 2200, 925, 35, 35, 0.4], ["r", 2215, 985, 32, 28, 0.5],
  ["r", 2105, 1055, 38, 30, 0.32], ["g", 2130, 1140, 50, 60, 0.65], ["r", 2210, 1180, 38, 38, 0.65],
  ["g", 2160, 1290, 60, 45, 0.45], ["g", 2120, 1350, 40, 60, 0.4], ["g", 2215, 1410, 40, 110, 0.4], ["r", 2140, 1430, 45, 50, 0.28],
  ["g", 2125, 1525, 50, 50, 0.8], ["g", 2200, 1520, 45, 55, 0.4],
];

const FloorPlan = () => (
  <svg className="block h-[852px] w-[958px] bg-white" viewBox="30 36 2874 2556">
    <defs>
      <pattern id="boards" width="400" height="78" patternUnits="userSpaceOnUse">
        <path d="M0 2H400M0 15H400M0 41H400M0 67H400" stroke="#dadada" strokeWidth="2" />
        <path d="M0 28H400M0 54H400" stroke="#c8c8c8" strokeWidth="2" />
        <path d="M0 35H260M120 60H400M40 9H180" stroke="#ececec" strokeWidth="2" />
      </pattern>
      <filter id="soft" x="0" y="0" width="2904" height="2592" filterUnits="userSpaceOnUse">
        <feGaussianBlur stdDeviation="24" />
      </filter>
    </defs>
    <path d="M172 122H870V137H2775V2095H2270V1700H2605V2440H215V1350H172Z" fill="url(#boards)" />
    <path d="M2605 1700H2775V2440H2605Z" fill="#fff" />
    <NorthWest />
    <NorthEast />
    <SouthWest />
    <SouthEast />
    <g className="mix-blend-multiply">
      <g filter="url(#soft)">
        {HEAT.map(([c, x, y, rx, ry, o], i) => <ellipse key={i} cx={x} cy={y} rx={rx} ry={ry} fill={c === "g" ? "#4fc18a" : "#ff6052"} opacity={o} />)}
      </g>
    </g>
    {[1902, 2064, 2226, 2376].map((x) => (
      <g key={x}>
        <circle cx={x} cy="2606" r="48" fill="#f4f4f4" />
        <circle cx={x} cy="2606" r="42" fill="#fff" />
        <circle cx={x} cy="2605" r="31" fill="#73cc9f" />
      </g>
    ))}
  </svg>
);

export default function App() {
  return (
    <div className="h-[2746px] w-[2560px] overflow-hidden bg-[#262729] font-['Liberation_Sans',Arial,sans-serif] text-[28px] leading-[31px] tracking-[2px] text-white">
      <header className="flex h-[120px] bg-[#191a1c] shadow-[inset_0_-2px_0_#0f1011]">
        <div className="mt-5 ml-[260px] flex h-20 w-[346px] items-start rounded-[4px] border-2 border-[#26282a] pt-[21px] pr-[23px] pl-[29px]">
          <span className="mt-[5px] flex"><Pin /></span>
          <span className="ml-[32px] grow">Locations</span>
          <Chevron className="mt-[13px] text-[#c8c9ca]" />
        </div>
        <div className="ml-12 w-[210px] border-t-[6px] border-[#ffbe3d] bg-[#262729] px-12 pt-[37px]">Manage</div>
        <div className="px-12 pt-[43px] text-[#7e848a]">Analytics</div>
        <div className="px-12 pt-[43px] text-[#7e848a]">Demo</div>
      </header>
      <nav className="flex h-24 pl-[152px] shadow-[inset_0_-2px_0_#0f1011]">
        <div className="px-6 pt-[31px] text-[#7e848a]">Groups</div>
        <div className="border-b-4 border-[#ffbe3d] px-6 pt-[31px]">Locations</div>
      </nav>
      <div className="flex h-32 items-start pt-[49px] pl-[152px]">
        <span>Chelsea</span>
        <Chevron className="mt-[11px] ml-[13px] text-[#7e848a]" />
        <span className="ml-[36px]">Floor 06</span>
        <Chevron className="mt-[11px] ml-[14px] text-[#7e848a]" />
      </div>

      <main className="flex items-start gap-12 pl-[152px]">
        <div className="flex w-[720px] flex-col gap-12">
          <Card className="h-[694px] border-t-2 border-[#ffdf9e] bg-[linear-gradient(#212224_158px,#262729_158px)] px-12 pt-[99px]">
            <h1 className="text-[96px] leading-[107px] font-bold whitespace-nowrap">Floor 06</h1>
            <Caption className="mt-[26px] h-[34px] w-[98px] rounded-[4px] border-2 border-[#ffdf9e] pt-[6px] pl-[10px]">FLOOR</Caption>
            <Caption className="mt-12 text-[#7e848a]">OVERVIEW</Caption>
            <div className="mt-3">
              <Row label="Location" value="Chelsea" />
              <Row label="Desks" value="400" />
              <Row label="Last Update" value="0 Days Ago" />
            </div>
            <div className="mt-[26px] h-20 w-[388px] rounded-[4px] border-2 border-[#1a1b1d] pt-[21px] pl-[23px] whitespace-nowrap text-[#b9babc]">Allocate Desk Positions</div>
          </Card>

          <Card className="h-[566px] border-t-2 border-[#262729] bg-[linear-gradient(#212224_118px,#262729_118px)] px-12 pt-[97px]">
            <Title>Current Usage</Title>
            <Select label="All Zones" className="mt-6" />
            <Caption className="mt-12 text-[#7e848a]">LAST UPDATED 3 MIN AGO</Caption>
            <div className="mt-3">
              <Row label="Checked In" value="88" />
              <Row label="Available" value="34" />
              <Row label="Squatting" value="44" />
            </div>
          </Card>
        </div>

        <div className="w-[1488px]">
          <div className="flex h-[72px] shadow-[inset_0_-2px_0_#1a1b1d]">
            <div className="px-6 pt-[19px] text-[#7e848a]">Desks</div>
            <div className="w-[180px] border-b-2 border-[#ffbe3d] pt-[19px] pl-[25px]">Analytics</div>
          </div>

          <Card className="mt-[60px] h-[638px] border-t-2 border-[#262729] bg-[linear-gradient(#212224_118px,#262729_118px)] px-12 pt-[102px]">
            <div className="flex h-[140px]">
              <div className="flex h-24 w-24 flex-col items-center rounded-[12px] border-2 border-[#ffbe3d] bg-[#ffcb6c] pt-[9px] text-[#262729]">
                <span className="text-[36px] leading-[41px] font-bold">A+</span>
                <span className="mt-[3px]">1.2</span>
              </div>
              <div className="-mt-[5px] ml-10 grow">
                <Title>Smart Desk Grade</Title>
                <p className="mt-[23px] leading-[40px] text-[#7e848a]">
                  Grade based on utilization
                  <br />
                  and headcount ratio.
                </p>
              </div>
              <div className="flex gap-6 pt-[60px]">
                <Select label="All Zones" className="w-[360px]" />
                <Select label="Past 30 Days" className="w-[360px]" />
              </div>
            </div>
            <div className="mt-[89px] flex">
              <div className="w-[392px]">
                <Title>Top 3 Zones</Title>
                <div className="mt-8 flex flex-col gap-4">
                  <Metric label="Zone F" value="A+" bar="bg-[#ffbe3d]" />
                  <Metric label="Zone A" value="B-" bar="bg-[#ffad0d]" />
                  <Metric label="Zone H" value="D" bar="bg-[#a46c00]" />
                </div>
              </div>
              <div className="ml-[120px]">
                <Title>Usage Metrics</Title>
                <div className="mt-8 flex gap-12">
                  <div className="flex w-[416px] flex-col gap-4">
                    <Metric label="Total Check Ins" value="12,391" />
                    <Metric label="Unique Check Ins" value="243" />
                    <Metric label="Avg Time Checked In" value="120m" />
                  </div>
                  <div className="flex w-[416px] flex-col gap-4">
                    <Metric label="Peak Utilization" value="88%" />
                    <Metric label="Avg Utilization" value="63%" />
                  </div>
                </div>
              </div>
            </div>
          </Card>

          <Card className="mt-12 flex h-[582px]">
            <SidePanel
              title="Zone Utilization"
              lines={["Average zone peak utilization", "per hour of the day."]}
              legend={[["bg-[#4fc188]", "ZONE F"], ["bg-[#4c98fb]", "ZONE A"], ["bg-[#ffbe3f]", "ZONE H"]]}
            />
            <div className="pt-12 pl-[46px]">
              <Caption className="text-[#7e848a]">HOUR</Caption>
              <div className="mt-[26px] flex">
                <div className="flex w-20 flex-col gap-[6px] pt-[26px] pl-px text-[18px] leading-[24px]">
                  {HOURS.map((h) => <span key={h}>{h}</span>)}
                </div>
                <div className="flex h-[348px] w-[788px] items-start gap-6 border-b-4 border-l-4 border-[#1a1b1d] pt-[26px] pl-[22px]">
                  {WEEK.map(([day, g, b, o]) => (
                    <div key={day} className="flex gap-1">
                      <Column levels={g} palette={GREEN} />
                      <Column levels={b} palette={BLUE} />
                      <Column levels={o} palette={GOLD} />
                    </div>
                  ))}
                </div>
              </div>
              <div className="mt-6 ml-[107px] flex gap-6">
                {WEEK.map(([day]) => <Caption key={day} className="w-32 text-center">{day}</Caption>)}
              </div>
              <Caption className="mt-[26px] ml-[106px] w-[736px] text-center text-[#7e848a]">DAY OF THE WEEK</Caption>
            </div>
          </Card>

          <Card className="mt-12 flex h-[852px]">
            <SidePanel
              title="Utilization Heat Map"
              lines={["Heat map of the floor and the", "desk’s utilization rate."]}
              legend={[["bg-[#4fc188]", "OVER UTILIZED"], ["bg-[#ff6452]", "UNDER UTILIZED"]]}
            />
            <FloorPlan />
          </Card>
        </div>
      </main>
    </div>
  );
}
